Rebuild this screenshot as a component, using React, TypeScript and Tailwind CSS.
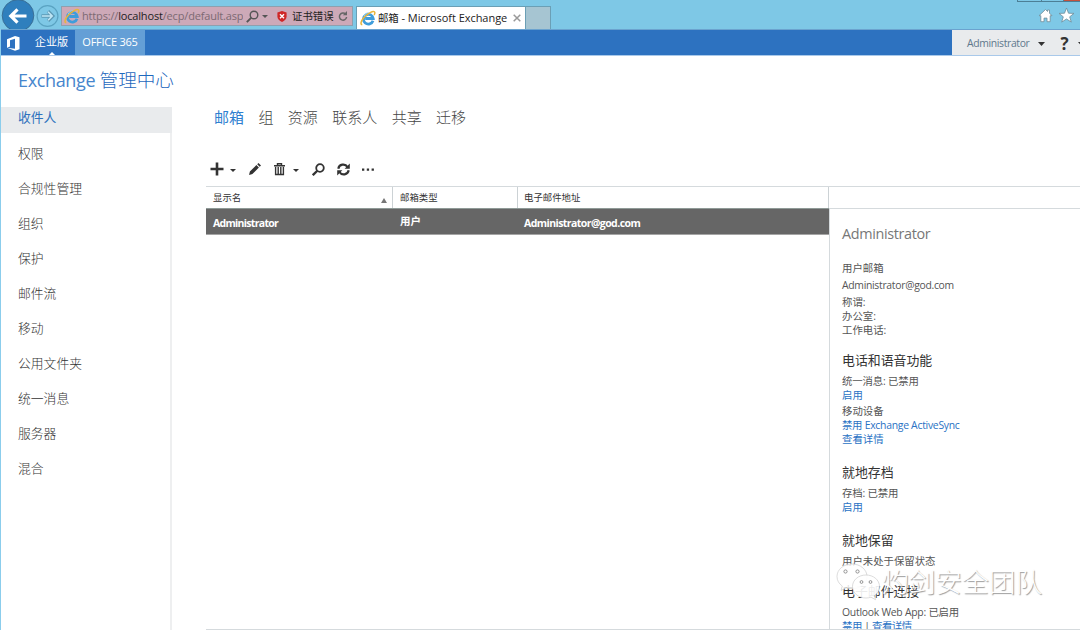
import type { ReactNode } from 'react';

const sideItems = ['权限', '合规性管理', '组织', '保护', '邮件流', '移动', '公用文件夹', '统一消息', '服务器', '混合'];

function IELogo() {
  return (
    <svg className="h-4 w-4 shrink-0" viewBox="0 0 16 16" fill="none">
      <path d="M13 10.8A4.900 4.900 0 1 1 13.200 8.500H5.200" stroke="#3f9ddb" strokeWidth="2.800" />
      <path d="M4.200 6.200C5 3.600 7 2.600 9 3" stroke="#8fd0f5" strokeWidth="1" />
      <path d="M2.300 14.600C.2 14.800.6 11 4.200 7.200 8 3.200 13 .6 14.400 1.800c.8.7.4 2-.3 3.200" stroke="#e9b53c" strokeWidth="1.500" />
    </svg>
  );
}

function Caret({ className = '' }: { className?: string }) {
  return (
    <svg className={`shrink-0 ${className}`} width="7" height="4" viewBox="0 0 7 4">
      <path d="M0 0h7L3.5 4z" fill="currentColor" />
    </svg>
  );
}

function SmallCaret({ className = '' }: { className?: string }) {
  return (
    <svg className={`shrink-0 ${className}`} width="6" height="3" viewBox="0 0 6 3">
      <path d="M0 0h6L3 3z" fill="currentColor" />
    </svg>
  );
}

function Magnifier({ className = '', weight = 1.8 }: { className?: string; weight?: number }) {
  return (
    <svg className={`shrink-0 ${className}`} width="13" height="13" viewBox="0 0 13 13" fill="none" stroke="currentColor" strokeWidth={weight}>
      <circle cx="8" cy="5" r="3.8" />
      <path d="M5.3 7.7L.8 12.2" strokeWidth={weight + 0.5} />
    </svg>
  );
}

function BrowserBar() {
  return (
    <header className="flex h-[29px] shrink-0 overflow-hidden bg-[#7ec8e6]">
      <svg className="h-[29px] w-[61px] shrink-0" viewBox="0 0 61 29" fill="none">
        <circle cx="18" cy="15.5" r="15.8" fill="#2f7fbd" stroke="#3a6f96" strokeWidth="1" />
        <path d="M26.5 16H11.5M17.5 9.3L10.8 16l6.7 6.7" stroke="#fff" strokeWidth="3.2" />
        <circle cx="47.5" cy="16" r="10.4" stroke="#5aa3c2" strokeWidth="1.2" />
        <path d="M41.5 16h11M48 11.3l4.7 4.7-4.7 4.7" stroke="#5c98b4" strokeWidth="3.4" />
        <path d="M42 16h10M48 11.8l4.2 4.2-4.2 4.2" stroke="#bfe6f5" strokeWidth="1.6" />
      </svg>
      <div className="mt-1.5 flex h-5 w-[292px] shrink-0 items-center border border-[#8f9fae] bg-[#cda9b8] pl-[2px] text-[#555]">
        <IELogo />
        <div className="ml-[2px] w-[161px] overflow-hidden whitespace-nowrap text-[11px] leading-4 tracking-[-0.170px] text-[#7c6973]">
          https://<span className="text-[#222]">localhost</span>/ecp/default.asp
        </div>
        <Magnifier className="ml-[3px]" weight={1.4} />
        <SmallCaret className="ml-[3px]" />
        <svg className="ml-[9px] shrink-0" width="10" height="11" viewBox="0 0 10 11">
          <path d="M5 0l4.600 1.600v4C9.600 8 7.500 10 5 11 2.500 10 .4 8 .4 5.600v-4z" fill="#cf2727" />
          <path d="M3 3.300l4 4M7 3.300l-4 4" stroke="#fff" strokeWidth="1.400" />
        </svg>
        <span className="ml-[5px] whitespace-nowrap text-[10.400px] leading-4 text-[#222]">证书错误</span>
        <svg className="ml-[4px] shrink-0" width="10" height="11" viewBox="0 0 10 11" fill="none">
          <path d="M7.600 3A3.600 3.600 0 1 0 8.600 6" stroke="#666" strokeWidth="1.500" />
          <path d="M9 0v4.200H4.800z" fill="#666" />
        </svg>
      </div>
      <div className="ml-[3px] mt-[6px] flex h-[23px] w-[170px] shrink-0 items-center border border-b-0 border-[#6b9fb5] bg-white pl-[3px]">
        <IELogo />
        <span className="ml-[2px] w-[131px] whitespace-nowrap text-[11px] leading-4 tracking-[-0.050px] text-[#222]">
          <span className="text-[10.400px]">邮箱</span> - Microsoft Exchange
        </span>
        <svg className="ml-[4px]" width="8" height="8" viewBox="0 0 8 8">
          <path d="M.7.7l6.600 6.600M7.300.7L.7 7.300" stroke="#999" strokeWidth="1.500" />
        </svg>
      </div>
      <div className="mt-[6px] h-[23px] w-[25px] shrink-0 border border-b-0 border-l-0 border-[#6b9fb5] bg-[#a6c5d2]" />
      <div className="ml-auto flex w-[63px] shrink-0 flex-col">
        <div className="flex h-[2px] border-b border-[#4c7f96]">
          <div className="w-[24px] border-l border-[#4c7f96]" />
          <div className="w-[22px] border-l border-[#4c7f96]" />
          <div className="flex-1 border-l border-[#4c7f96] bg-[#c4513d]" />
        </div>
        <svg width="63" height="27" viewBox="0 0 63 27" fill="#fff" stroke="#6e8b98" strokeWidth=".8">
          <path d="M28.500 7.500l2 2V8h2v3.200l2.500 2.500h-1.800v6h-3.200v-3.600h-3v3.600h-3.200v-6H22z" />
          <path d="M49.500 6l2 5.200 5.500.2-4.300 3.400 1.600 5.300-4.800-3.100-4.800 3.100 1.600-5.300-4.300-3.400 5.500-.2z" />
        </svg>
      </div>
    </header>
  );
}

function SuiteBar() {
  return (
    <nav className="flex h-[27px] shrink-0 border-b border-t border-b-[#a9c9ea] border-t-[#6ba3cf] bg-[#2d72c0] text-white">
      <svg className="ml-[6px] mt-[6px] shrink-0" width="13" height="15" viewBox="0 0 13 15">
        <path d="M0 3.200L8 0l4.500 1.300v12L8 14.800 0 11.800l8 1V2.800L3 4.200v6.300l-3 1.300z" fill="#fff" />
      </svg>
      <div className="flex w-[55px] flex-col items-center justify-between pl-[8px]">
        <span className="mt-[4px] whitespace-nowrap text-[11.200px] leading-4">企业版</span>
        <svg width="6" height="3" viewBox="0 0 6 3"><path d="M0 3l3-3 3 3z" fill="#fff" /></svg>
      </div>
      <div className="flex w-[70px] items-center justify-center whitespace-nowrap bg-[#649fd6] text-[11px] tracking-[-0.240px]">OFFICE 365</div>
      <div className="ml-auto flex w-[128px] items-center bg-[#e9ebed] pl-[15px] pt-[2px] text-[#60788c]">
        <span className="w-[63px] whitespace-nowrap text-[10.400px] tracking-[-0.350px]">Administrator</span>
        <Caret className="ml-[8px] text-[#333]" />
        <span className="ml-[16px] w-[9px] text-[17px] font-bold leading-5 text-[#333]">?</span>
        <Caret className="ml-[9px] text-[#333]" />
      </div>
    </nav>
  );
}

function Sidebar() {
  return (
    <aside className="w-[171px] shrink-0 border-r-2 border-[#eeeff0] text-[12.800px] font-light text-[#333]">
      <div className="-mr-[2px] flex h-[26px] items-center bg-[#e9ebed] pb-[4px] pl-[17px] font-normal text-[#2f72bd]">收件人</div>
      <div className="pt-[3px]">
        {sideItems.map((s) => (
          <div key={s} className="flex h-[35px] items-center pl-[17px]">{s}</div>
        ))}
      </div>
    </aside>
  );
}

function Toolbar() {
  return (
    <div className="mt-[31px] flex h-[18px] shrink-0 items-center pl-[4px] text-[#333]">
      <svg width="14" height="14" viewBox="0 0 14 14"><path d="M7 .5v13M.5 7h13" stroke="currentColor" strokeWidth="2.600" /></svg>
      <SmallCaret className="ml-[6px] mt-[2px]" />
      <svg className="ml-[13px]" width="12" height="12" viewBox="0 0 12 12" fill="currentColor">
        <path d="M0 12l.9-3.400L7.400 2.100l2.500 2.500L3.400 11.100zM8.200 1.300L9.500 0 12 2.500l-1.300 1.300z" />
      </svg>
      <svg className="ml-[13px]" width="11" height="13" viewBox="0 0 11 13" fill="none" stroke="currentColor">
        <path d="M0 2.800h11M3.500 2V.8h4V2" strokeWidth="1.400" />
        <path d="M1.600 3.800v7.700h7.800V3.800M4.200 4v7M6.800 4v7" strokeWidth="1.400" />
      </svg>
      <SmallCaret className="ml-[8px] mt-[2px]" />
      <Magnifier className="ml-[13px]" />
      <svg className="ml-[12px]" width="13" height="13" viewBox="0 0 13 13" fill="none" stroke="currentColor" strokeWidth="2.200">
        <path d="M1.300 5.700A5 5 0 0 1 10.500 4M11.700 7.300A5 5 0 0 1 2.500 9" />
        <path d="M12.800.5v5.300H7.600zM.2 12.500V7.200h5.200z" fill="currentColor" stroke="none" />
      </svg>
      <svg className="ml-[12px]" width="12" height="3" viewBox="0 0 12 3" fill="currentColor">
        <path d="M0 .5h2.300v2.200H0zM4.800.5h2.300v2.200H4.800zM9.600.5h2.300v2.200H9.600z" />
      </svg>
    </div>
  );
}

function Table() {
  return (
    <div className="w-[623px] shrink-0">
      <div className="flex h-[21px] text-[9.400px] text-[#333]">
        <div className="flex w-[187px] items-center justify-between border-r border-[#ccd2d5] pl-[7px] pr-[5px] pt-[1px]">
          显示名
          <svg className="mt-1" width="6" height="5" viewBox="0 0 6 5"><path d="M0 5h6L3 0z" fill="#777" /></svg>
        </div>
        <div className="flex w-[125px] items-center border-r border-[#ccd2d5] pl-[7px] pt-[1px]">邮箱类型</div>
        <div className="flex flex-1 items-center border-r border-[#ccd2d5] pl-[6px] pt-[1px]">电子邮件地址</div>
      </div>
      <div className="flex h-[27px] items-center border-b border-t border-b-[#a5a5a5] border-t-[#8f9a97] bg-[#666] pt-[5px] text-[10.500px] font-bold text-white">
        <div className="w-[187px] pl-[7px] tracking-[-0.700px]">Administrator</div>
        <div className="-mt-[4px] w-[125px] pl-[7px]">用户</div>
        <div className="pl-[6px] tracking-[-0.560px]">Administrator@god.com</div>
      </div>
    </div>
  );
}

function Line({ className = '', children }: { className?: string; children: ReactNode }) {
  return <div className={`flex h-[14px] items-center whitespace-pre ${className}`}>{children}</div>;
}

function Heading({ className = '', children }: { className?: string; children: ReactNode }) {
  return <h3 className={`flex h-[18px] items-center whitespace-nowrap text-[12.900px] text-[#333] ${className}`}>{children}</h3>;
}

function Details() {
  return (
    <section className="min-w-0 flex-1 pt-[21px]">
      <div className="h-full border-l border-t border-[#d5dadd] pl-[12px] pt-[13px] text-[10.400px] text-[#555]">
        <h2 className="flex h-6 items-center text-[14.400px] tracking-[-0.350px] text-[#777]">Administrator</h2>
        <Line className="mt-[16px]">用户邮箱</Line>
        <Line className="mt-[3px] tracking-[-0.300px]">Administrator@god.com</Line>
        <Line className="mt-[3px]">称谓:</Line>
        <Line>办公室:</Line>
        <Line>工作电话:</Line>
        <Heading className="mt-[14px]">电话和语音功能</Heading>
        <Line className="mt-[5px] tracking-[-0.150px]">统一消息: 已禁用</Line>
        <Line className="text-[#2a72c4]">启用</Line>
        <Line className="mt-[2px]">移动设备</Line>
        <Line className="tracking-[-0.270px] text-[#2a72c4]">禁用 Exchange ActiveSync</Line>
        <Line className="text-[#2a72c4]">查看详情</Line>
        <Heading className="mt-[17px]">就地存档</Heading>
        <Line className="mt-[5px] tracking-[-0.150px]">存档: 已禁用</Line>
        <Line className="text-[#2a72c4]">启用</Line>
        <Heading className="mt-[17px]">就地保留</Heading>
        <Line className="mt-[5px]">用户未处于保留状态</Line>
        <Heading className="mt-[14px]">电子邮件连接</Heading>
        <Line className="mt-[5px] tracking-[-0.250px]">Outlook Web App: 已启用</Line>
        <Line className="tracking-[-0.400px] text-[#2a72c4]">禁用<span className="text-[#555]"> | </span>查看详情</Line>
      </div>
    </section>
  );
}

function Watermark() {
  return (
    <div className="absolute left-[836px] top-[561px] flex h-[42px] items-center">
      <svg width="46" height="38" viewBox="0 0 46 38" fill="#fff" stroke="#c4c4c4" strokeWidth=".6">
        <path d="M16 1C7.500 1 1 6.500 1 13.500c0 4 2 7.300 5.300 9.600L5 27.500l5-2.700c2 .6 4 .9 6 .9 8.500 0 15-5.500 15-12.200S24.500 1 16 1z" fillOpacity=".85" />
        <path d="M30 12c-7.500 0-13.500 5-13.500 11.500S22.500 35 30 35c1.700 0 3.400-.3 5-.8l4.500 2.500-1.200-4c3.200-2.200 5.200-5.400 5.200-9.200C43.500 17 37.500 12 30 12z" fillOpacity=".9" />
        <g fill="#fff" stroke="#888" strokeWidth=".9">
          <circle cx="9.500" cy="8.500" r="1.600" /><circle cx="21.500" cy="8.500" r="1.600" />
          <circle cx="25.500" cy="19" r="1.400" /><circle cx="34.500" cy="19" r="1.400" />
        </g>
      </svg>
      <span className="whitespace-nowrap text-[26.700px] font-light leading-none text-white [text-shadow:1px_1px_1px_#999]">灼剑安全团队</span>
    </div>
  );
}

export default function App() {
  return (
    <div className="relative flex h-[630px] w-[1080px] flex-col overflow-hidden bg-white [font-family:'Open_Sans','Noto_Sans_CJK_SC',sans-serif]">
      <BrowserBar />
      <div className="flex min-h-0 flex-1 flex-col border-l border-[#8bcdec]">
        <SuiteBar />
        <div className="flex h-[51px] shrink-0 items-center pb-[4px] pl-[17px]">
          <h1 className="whitespace-nowrap text-[18.600px] font-light text-[#1f68bd]">
            <span className="text-[18px] font-normal tracking-[-0.350px] text-[#4686cd]">Exchange </span>管理中心
          </h1>
        </div>
        <div className="flex min-h-0 flex-1">
          <Sidebar />
          <main className="flex min-w-0 flex-1 flex-col pl-[34px]">
            <div className="flex h-[22px] shrink-0 items-center gap-[14.400px] pb-[2px] pl-[8px] text-[15px] font-light text-[#444]">
              <span className="font-normal text-[#2f7fd0]">邮箱</span>
              <span>组</span><span>资源</span><span>联系人</span><span>共享</span><span>迁移</span>
            </div>
            <Toolbar />
            <div className="mt-[8px] flex min-h-0 flex-1 overflow-hidden border-b border-t border-[#d5dadd]">
              <Table />
              <Details />
            </div>
          </main>
        </div>
      </div>
      <Watermark />
    </div>
  );
}
